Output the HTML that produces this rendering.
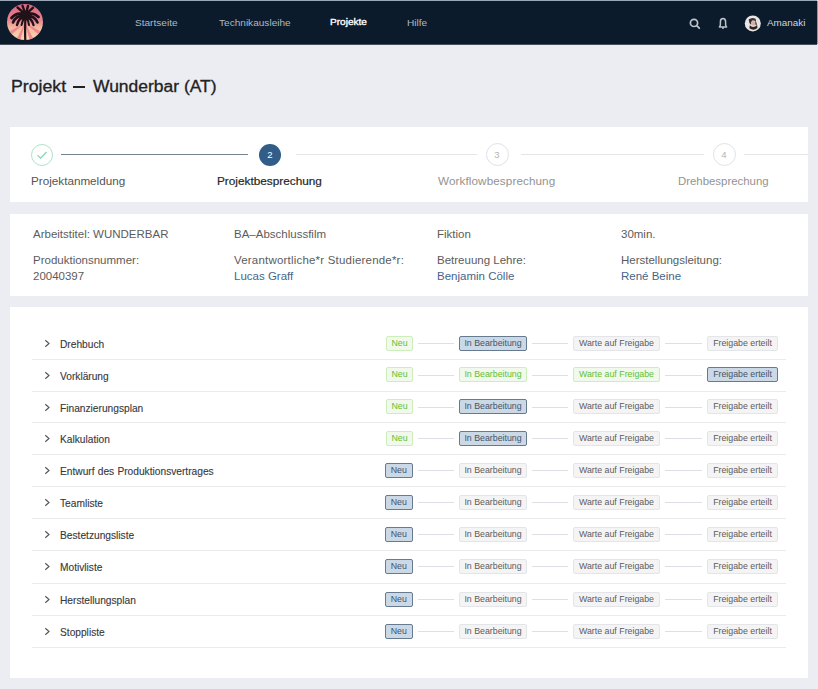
<!DOCTYPE html>
<html><head><meta charset="utf-8">
<style>
*{margin:0;padding:0;box-sizing:border-box}
html,body{width:818px;height:689px;overflow:hidden;background:#ecedf2;font-family:"Liberation Sans",sans-serif;position:relative}
.abs{position:absolute}
#nav{position:absolute;left:0;top:1px;width:817px;height:43px;background:#0c1b2b;box-shadow:0 1px 0 #46515d,1px 0 0 #8c96a0}
#topline{position:absolute;left:0;top:0;width:817px;height:1px;background:#9ba8b7}
.nl{position:absolute;top:15.5px;font-size:9.9px;color:#b0b8c1;white-space:nowrap;line-height:12px;transform-origin:0 0;transform:scaleX(1.02)}
.nl.act{color:#fff;-webkit-text-stroke:0.35px #fff;font-size:9.9px;top:15px}
#title{position:absolute;left:0;top:77px;width:300px;height:20px}
.tp{position:absolute;top:0;font-size:15.8px;color:#222;white-space:nowrap;line-height:20px;-webkit-text-stroke:0.3px #222;transform-origin:0 0}
.card{position:absolute;left:10px;width:798px;background:#fff}
.circ{position:absolute;width:22px;height:22px;border-radius:50%;top:143.5px}
.sl{position:absolute;top:174px;font-size:11.7px;white-space:nowrap;line-height:14px}
.line{position:absolute;height:1px;top:154px}
.it{position:absolute;font-size:11.5px;color:#5c5c5c;white-space:nowrap;line-height:14px}
.lk{color:#44658b}
.row{position:absolute;left:0;width:818px;height:32px}
.row::after{content:"";position:absolute;left:32px;width:754px;bottom:-1px;height:1px;background:#e9ebef}
.chev{position:absolute;left:44px;top:12px}
.rname{position:absolute;left:60px;top:11.6px;font-size:10.2px;word-spacing:0.4px;color:#38393b;-webkit-text-stroke:0.12px #38393b;line-height:12px;white-space:nowrap}
.tag{position:absolute;top:9px;height:15px;border:1px solid #e4e5e8;background:#f4f4f5;color:#5c5c5c;border-radius:2px;font-size:8.8px;line-height:13px;text-align:center;white-space:nowrap}
.tag.g{background:#f0f9eb;border-color:#cdeebb;color:#63bf36}
.tag.s{background:#cbd8e5;border-color:#667a90;color:#435569}
.tl{position:absolute;top:16px;height:1px;background:#dcdfe3}
</style></head><body>
<div id="topline"></div>
<div id="nav">
  <svg class="abs" style="left:6px;top:2px" width="38" height="38" viewBox="0 0 38 38">
    <defs>
      <linearGradient id="sun" x1="0" y1="0" x2="0" y2="1">
        <stop offset="0" stop-color="#dc6680"/>
        <stop offset="0.45" stop-color="#e98590"/>
        <stop offset="0.65" stop-color="#f3b89c"/>
        <stop offset="1" stop-color="#f8d8b6"/>
      </linearGradient>
    </defs>
    <circle cx="19" cy="19" r="18" fill="url(#sun)"/>
    <g fill="#eb7a88" opacity="0.8">
      <path d="M19 20 L4 28 L6 31 Z"/><path d="M19 20 L11 35 L14.5 36.5 Z"/><path d="M19 20 L34 28 L32 31 Z"/><path d="M19 20 L27 35 L23.5 36.5 Z"/>
    </g>
    <g stroke="#21121a" fill="none" stroke-linecap="round">
      <path d="M19.5 13 Q18.8 26 19.3 38" stroke-width="2.2"/>
      <path d="M19 12 Q11 8.5 5.5 15" stroke-width="2.8"/>
      <path d="M19 13 Q10 12 7 19.5" stroke-width="2.6"/>
      <path d="M19 13 Q12.5 15 11 22" stroke-width="2.4"/>
      <path d="M19 14 Q16.5 17 15.5 22" stroke-width="2"/>
      <path d="M20 12 Q27 8.5 32.5 14" stroke-width="2.8"/>
      <path d="M20 13 Q28 12 31.5 19.5" stroke-width="2.6"/>
      <path d="M20 13 Q25.5 15 27.5 22" stroke-width="2.4"/>
      <path d="M20 14 Q22.5 17 23 22" stroke-width="2"/>
      <path d="M19 12 Q15 7 11.5 4.5" stroke-width="2.4"/>
      <path d="M19 12 Q18 6 16.5 2.8" stroke-width="2.4"/>
      <path d="M20 12 Q21 6 22 3" stroke-width="2.4"/>
      <path d="M20 12 Q24 7 27 4.8" stroke-width="2.4"/>
    </g>
    <ellipse cx="19.5" cy="12.5" rx="6" ry="5" fill="#21121a"/>
  </svg>
  <span class="nl" style="left:135px">Startseite</span>
  <span class="nl" style="left:219px">Technikausleihe</span>
  <span class="nl act" style="left:330px">Projekte</span>
  <span class="nl" style="left:407px">Hilfe</span>
  <svg class="abs" style="left:688px;top:15px" width="13" height="14" viewBox="0 0 13 14"><circle cx="6" cy="6.9" r="3.6" fill="none" stroke="#bcc3cb" stroke-width="1.7"/><path d="M8.7 9.6 L11.3 12.2" stroke="#bcc3cb" stroke-width="1.8" stroke-linecap="round"/></svg>
  <svg class="abs" style="left:717px;top:14px" width="12" height="14" viewBox="0 0 12 14"><path d="M2.4 12 Q3.4 11 3.4 9.2 L3.4 6.8 Q3.4 3.4 6 3.4 Q8.6 3.4 8.6 6.8 L8.6 9.2 Q8.6 11 9.6 12 Z" fill="none" stroke="#bcc3cb" stroke-width="1.5" stroke-linejoin="round"/><circle cx="6" cy="12.9" r="1" fill="#bcc3cb"/></svg>
  <svg class="abs" style="left:744px;top:14px" width="18" height="18" viewBox="0 0 18 18"><circle cx="8.8" cy="8.4" r="8" fill="#e9e6e6"/><path d="M4.6 4.5 Q8 1.8 11.5 3.8 L12.3 6.5 Q10 5 8.2 5.6 Q6.8 6.8 7.2 10 Q4.8 8.2 4.6 4.5 Z" fill="#3e302e"/><ellipse cx="9.4" cy="8.3" rx="2" ry="2.5" fill="#cfb2aa"/><path d="M5.8 10.2 Q9 13.8 13.2 10 L13.4 13 Q9.5 16.2 5.4 13.2 Z" fill="#2f2220"/><path d="M11 5.5 Q13 7.5 13 10.2 L11.3 9.8 Z" fill="#5d4a46"/></svg>
  <span class="nl" style="left:767px;color:#d0d5db;transform:none">Amanaki</span>
</div>
<div id="title"><span class="tp" style="left:11px;transform:scaleX(1.12)">Projekt</span><span class="abs" style="left:73px;top:9px;width:12px;height:1.6px;background:#222"></span><span class="tp" style="left:93px;transform:scaleX(1.105)">Wunderbar (AT)</span></div>

<div class="card" style="top:127px;height:75px"></div>
<div class="circ" style="left:31px;border:1px solid #ade3cb"></div>
<svg class="abs" style="left:31px;top:143.5px" width="22" height="22" viewBox="0 0 22 22"><path d="M6.5 11.2 L9.6 14.2 L15.5 8" fill="none" stroke="#7fd3ae" stroke-width="1.1"/></svg>
<div class="line" style="left:61px;width:187px;background:#76828f;height:1.5px;top:153.5px"></div>
<div class="circ" style="left:259px;background:#325d88;color:#fff;font-size:9.5px;line-height:22px;text-align:center">2</div>
<div class="line" style="left:296px;width:181px;background:#e4e5e7"></div>
<div class="circ" style="left:485.5px;top:143px;width:23px;height:23px;border:1px solid #e2e2e4;color:#b4b4b8;font-size:9.5px;line-height:21px;text-align:center">3</div>
<div class="line" style="left:521px;width:183px;background:#e4e5e7"></div>
<div class="circ" style="left:712.5px;top:143px;width:23px;height:23px;border:1px solid #e2e2e4;color:#b4b4b8;font-size:9.5px;line-height:21px;text-align:center">4</div>
<div class="line" style="left:744px;width:64px;background:#e4e5e7"></div>
<span class="sl" style="left:31px;color:#555">Projektanmeldung</span>
<span class="sl" style="left:217px;color:#262626;-webkit-text-stroke:0.2px #262626;font-size:11.8px">Projektbesprechung</span>
<span class="sl" style="left:438px;color:#939393;letter-spacing:0.1px">Workflowbesprechung</span>
<span class="sl" style="left:678px;color:#939393;font-size:11.4px">Drehbesprechung</span>

<div class="card" style="top:214px;height:82px"></div>
<span class="it" style="left:33px;top:227px">Arbeitstitel: WUNDERBAR</span>
<span class="it" style="left:33px;top:253px">Produktionsnummer:</span>
<span class="it" style="left:33px;top:269px">20040397</span>
<span class="it" style="left:234px;top:227px">BA–Abschlussfilm</span>
<span class="it" style="left:234px;top:253px;letter-spacing:0.2px">Verantwortliche*r Studierende*r:</span>
<span class="it lk" style="left:234px;top:269px">Lucas Graff</span>
<span class="it" style="left:437px;top:227px">Fiktion</span>
<span class="it" style="left:437px;top:253px">Betreuung Lehre:</span>
<span class="it lk" style="left:437px;top:269px">Benjamin Cölle</span>
<span class="it" style="left:621px;top:227px">30min.</span>
<span class="it" style="left:621px;top:253px">Herstellungsleitung:</span>
<span class="it lk" style="left:621px;top:269px">René Beine</span>

<div class="card" style="top:307px;height:371px"></div>
<div class="row" style="top:327px;height:32px"><svg class="chev" width="7" height="9" viewBox="0 0 7 9"><path d="M1.3 1.2 L5 4.5 L1.3 7.8" fill="none" stroke="#555" stroke-width="1.15"/></svg><span class="rname">Drehbuch</span><span class="tag g" style="left:386px;width:27px;top:9px">Neu</span><span class="tag s" style="left:459px;width:68px;top:9px">In Bearbeitung</span><span class="tag n" style="left:573px;width:87px;top:9px">Warte auf Freigabe</span><span class="tag n" style="left:707px;width:71px;top:9px">Freigabe erteilt</span><span class="tl" style="left:418px;width:36px"></span><span class="tl" style="left:532px;width:36px"></span><span class="tl" style="left:665px;width:37px"></span></div>
<div class="row" style="top:359px;height:32px"><svg class="chev" width="7" height="9" viewBox="0 0 7 9"><path d="M1.3 1.2 L5 4.5 L1.3 7.8" fill="none" stroke="#555" stroke-width="1.15"/></svg><span class="rname">Vorklärung</span><span class="tag g" style="left:386px;width:27px;top:8px">Neu</span><span class="tag g" style="left:459px;width:68px;top:8px">In Bearbeitung</span><span class="tag g" style="left:573px;width:87px;top:8px">Warte auf Freigabe</span><span class="tag s" style="left:707px;width:71px;top:8px">Freigabe erteilt</span><span class="tl" style="left:418px;width:36px"></span><span class="tl" style="left:532px;width:36px"></span><span class="tl" style="left:665px;width:37px"></span></div>
<div class="row" style="top:391px;height:31px"><svg class="chev" width="7" height="9" viewBox="0 0 7 9"><path d="M1.3 1.2 L5 4.5 L1.3 7.8" fill="none" stroke="#555" stroke-width="1.15"/></svg><span class="rname">Finanzierungsplan</span><span class="tag g" style="left:386px;width:27px;top:8px">Neu</span><span class="tag s" style="left:459px;width:68px;top:8px">In Bearbeitung</span><span class="tag n" style="left:573px;width:87px;top:8px">Warte auf Freigabe</span><span class="tag n" style="left:707px;width:71px;top:8px">Freigabe erteilt</span><span class="tl" style="left:418px;width:36px"></span><span class="tl" style="left:532px;width:36px"></span><span class="tl" style="left:665px;width:37px"></span></div>
<div class="row" style="top:422px;height:32px"><svg class="chev" width="7" height="9" viewBox="0 0 7 9"><path d="M1.3 1.2 L5 4.5 L1.3 7.8" fill="none" stroke="#555" stroke-width="1.15"/></svg><span class="rname">Kalkulation</span><span class="tag g" style="left:386px;width:27px;top:9px">Neu</span><span class="tag s" style="left:459px;width:68px;top:9px">In Bearbeitung</span><span class="tag n" style="left:573px;width:87px;top:9px">Warte auf Freigabe</span><span class="tag n" style="left:707px;width:71px;top:9px">Freigabe erteilt</span><span class="tl" style="left:418px;width:36px"></span><span class="tl" style="left:532px;width:36px"></span><span class="tl" style="left:665px;width:37px"></span></div>
<div class="row" style="top:454px;height:32px"><svg class="chev" width="7" height="9" viewBox="0 0 7 9"><path d="M1.3 1.2 L5 4.5 L1.3 7.8" fill="none" stroke="#555" stroke-width="1.15"/></svg><span class="rname">Entwurf des Produktionsvertrages</span><span class="tag s" style="left:384.5px;width:28.5px;top:9px">Neu</span><span class="tag n" style="left:459px;width:68px;top:9px">In Bearbeitung</span><span class="tag n" style="left:573px;width:87px;top:9px">Warte auf Freigabe</span><span class="tag n" style="left:707px;width:71px;top:9px">Freigabe erteilt</span><span class="tl" style="left:418px;width:36px"></span><span class="tl" style="left:532px;width:36px"></span><span class="tl" style="left:665px;width:37px"></span></div>
<div class="row" style="top:486px;height:32px"><svg class="chev" width="7" height="9" viewBox="0 0 7 9"><path d="M1.3 1.2 L5 4.5 L1.3 7.8" fill="none" stroke="#555" stroke-width="1.15"/></svg><span class="rname">Teamliste</span><span class="tag s" style="left:384.5px;width:28.5px;top:9px">Neu</span><span class="tag n" style="left:459px;width:68px;top:9px">In Bearbeitung</span><span class="tag n" style="left:573px;width:87px;top:9px">Warte auf Freigabe</span><span class="tag n" style="left:707px;width:71px;top:9px">Freigabe erteilt</span><span class="tl" style="left:418px;width:36px"></span><span class="tl" style="left:532px;width:36px"></span><span class="tl" style="left:665px;width:37px"></span></div>
<div class="row" style="top:518px;height:32px"><svg class="chev" width="7" height="9" viewBox="0 0 7 9"><path d="M1.3 1.2 L5 4.5 L1.3 7.8" fill="none" stroke="#555" stroke-width="1.15"/></svg><span class="rname">Bestetzungsliste</span><span class="tag s" style="left:384.5px;width:28.5px;top:9px">Neu</span><span class="tag n" style="left:459px;width:68px;top:9px">In Bearbeitung</span><span class="tag n" style="left:573px;width:87px;top:9px">Warte auf Freigabe</span><span class="tag n" style="left:707px;width:71px;top:9px">Freigabe erteilt</span><span class="tl" style="left:418px;width:36px"></span><span class="tl" style="left:532px;width:36px"></span><span class="tl" style="left:665px;width:37px"></span></div>
<div class="row" style="top:550px;height:33px"><svg class="chev" width="7" height="9" viewBox="0 0 7 9"><path d="M1.3 1.2 L5 4.5 L1.3 7.8" fill="none" stroke="#555" stroke-width="1.15"/></svg><span class="rname">Motivliste</span><span class="tag s" style="left:384.5px;width:28.5px;top:9px">Neu</span><span class="tag n" style="left:459px;width:68px;top:9px">In Bearbeitung</span><span class="tag n" style="left:573px;width:87px;top:9px">Warte auf Freigabe</span><span class="tag n" style="left:707px;width:71px;top:9px">Freigabe erteilt</span><span class="tl" style="left:418px;width:36px"></span><span class="tl" style="left:532px;width:36px"></span><span class="tl" style="left:665px;width:37px"></span></div>
<div class="row" style="top:583px;height:32px"><svg class="chev" width="7" height="9" viewBox="0 0 7 9"><path d="M1.3 1.2 L5 4.5 L1.3 7.8" fill="none" stroke="#555" stroke-width="1.15"/></svg><span class="rname">Herstellungsplan</span><span class="tag s" style="left:384.5px;width:28.5px;top:9px">Neu</span><span class="tag n" style="left:459px;width:68px;top:9px">In Bearbeitung</span><span class="tag n" style="left:573px;width:87px;top:9px">Warte auf Freigabe</span><span class="tag n" style="left:707px;width:71px;top:9px">Freigabe erteilt</span><span class="tl" style="left:418px;width:36px"></span><span class="tl" style="left:532px;width:36px"></span><span class="tl" style="left:665px;width:37px"></span></div>
<div class="row" style="top:615px;height:32px"><svg class="chev" width="7" height="9" viewBox="0 0 7 9"><path d="M1.3 1.2 L5 4.5 L1.3 7.8" fill="none" stroke="#555" stroke-width="1.15"/></svg><span class="rname">Stoppliste</span><span class="tag s" style="left:384.5px;width:28.5px;top:9px">Neu</span><span class="tag n" style="left:459px;width:68px;top:9px">In Bearbeitung</span><span class="tag n" style="left:573px;width:87px;top:9px">Warte auf Freigabe</span><span class="tag n" style="left:707px;width:71px;top:9px">Freigabe erteilt</span><span class="tl" style="left:418px;width:36px"></span><span class="tl" style="left:532px;width:36px"></span><span class="tl" style="left:665px;width:37px"></span></div>
</body></html>
